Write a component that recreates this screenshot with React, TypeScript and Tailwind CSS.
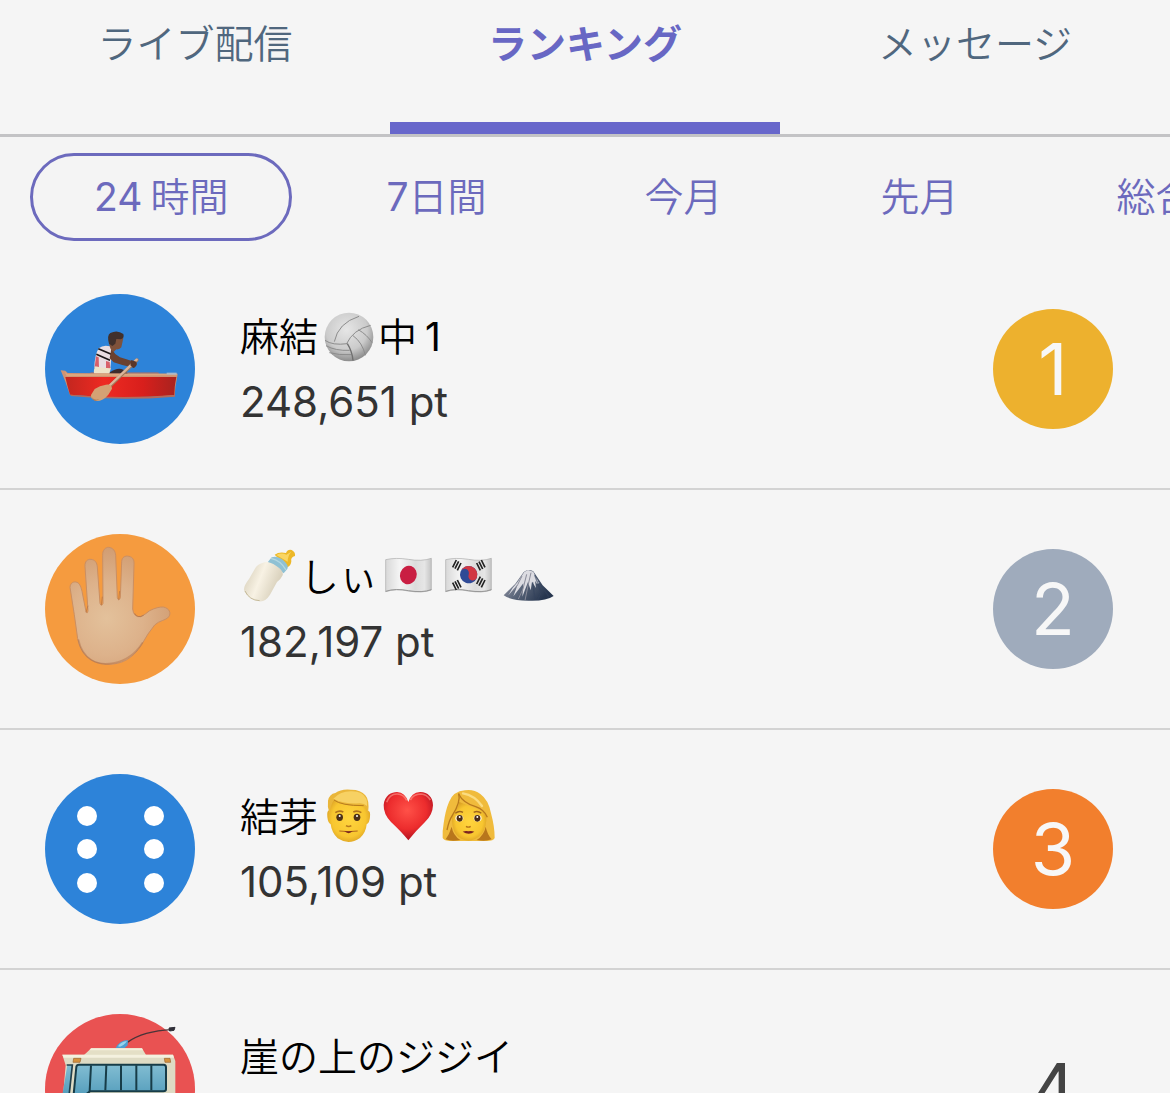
import { useState } from 'react';
import type { ReactNode } from 'react';
import clsx from 'clsx';

// ── Avatars ──

function RowboatAvatar() {
  return (
    <svg viewBox="15 27 450 450" className="h-full w-full overflow-visible" aria-hidden="true">
      <defs>
        <linearGradient id="hull" x1="0" x2="1" y1="0" y2="0">
          <stop offset="0" stopColor="#c2261f" />
          <stop offset=".35" stopColor="#ee2a22" />
          <stop offset=".7" stopColor="#d81f1c" />
          <stop offset="1" stopColor="#a8231f" />
        </linearGradient>
      </defs>
      <path d="M148 268 152 262H355L358 268Z" fill="#8d7480" />
      <path d="M210 262Q232 246 250 254L264 267H208Z" fill="#3d2b2c" />
      <path d="M176 190Q190 178 210 184L218 196Q213 222 211 252Q185 254 163 248Q164 210 176 190Z" fill="#e9dde2" />
      <path d="M168 214 176 217 177 250 164 247ZM198 228 209 231 211 252 198 252Z" fill="#d8606a" />
      <path d="M175 191 214 208M169 208 210 226" stroke="#1c1718" strokeWidth="5" />
      <path d="M166 244Q186 250 213 250L206 271 164 269Q158 260 166 244Z" fill="#ede3c8" />
      <path d="M214 191Q223 207 240 217L276 228Q291 230 290 240L282 248Q250 243 221 232L209 220Z" fill="#6a4130" />
      <path d="M212 192Q204 172 208 160Q216 145 236 148L250 158 248 169 244 187Q239 194 229 193L220 202Z" fill="#7f523b" />
      <path d="M207 176Q200 151 211 144Q232 133 250 147Q254 160 242 163L229 162 226 176 217 183Z" fill="#41302b" />
      <path d="M62 256 76 257 83 264 413 266 412 274Q405 302 404 334L90 330Q78 292 62 256Z" fill="#cf9373" />
      <path d="M76 276 409 276Q403 303 403 331Q250 344 90 329Q82 304 76 276Z" fill="url(#hull)" />
      <path d="M91 329Q240 343 404 330L405 335Q240 349 93 333Z" fill="#b36b5c" />
      <path d="M75 261 82 267 410 266V271L80 274Z" fill="#dca77e" />
      <path d="M380 263H410V269H380Z" fill="#a9b8cb" />
      <path d="M291 225 205 308" stroke="#a3795a" strokeWidth="10" strokeLinecap="round" />
      <path d="M290 224 204 306" stroke="#dbb49a" strokeWidth="7" strokeLinecap="round" />
      <path d="M198 299Q215 297 216 311L205 329Q188 349 169 348Q151 344 153 330L164 312Q179 301 198 299Z" fill="#d4a174" />
      <path d="M154 333Q160 348 178 343Q160 355 154 333Z" fill="#ad7650" />
      <path d="M274 225 289 230Q293 242 281 249L271 241Z" fill="#5a3629" />
    </svg>
  );
}

function HandAvatar() {
  return (
    <svg viewBox="15 27 450 450" className="h-full w-full" aria-hidden="true">
      <defs>
        <radialGradient id="skin" gradientUnits="userSpaceOnUse" cx="200" cy="280" r="220">
          <stop offset="0" stopColor="#e3c19b" />
          <stop offset=".5" stopColor="#ddb28b" />
          <stop offset="1" stopColor="#d09b70" />
        </radialGradient>
      </defs>
      <path
        d="M90 187C91 173 102 168 111 172C120 175 124 190 126 199L138 260Q142 269 144 257L135 125C134 108 143 102 153 103C165 104 171 113 172 126L180 235Q184 247 189 235L188 92C187 75 196 67 206 67C219 68 226 78 227 91L232 218Q236 231 241 218L245 109C246 97 255 91 267 94C279 97 283 105 282 119L278 252Q281 278 302 275Q315 269 329 257Q353 245 370 246C389 250 393 264 387 275C377 287 358 286 344 300Q323 325 305 359C278 402 244 419 200 418C150 416 121 385 113 341Q104 272 90 187Z"
        fill="url(#skin)"
        stroke="#cb8f62"
        strokeWidth="3"
      />
      <path d="M115 343C128 403 171 424 220 414C268 405 292 378 308 352" fill="none" stroke="#a8673f" strokeWidth="5" opacity=".4" />
      <path d="M138 262 144 242M184 240 187 215M236 224 239 198M284 265Q293 281 311 271" fill="none" stroke="#aa6d44" strokeWidth="3" opacity=".6" />
    </svg>
  );
}

function DiceAvatar() {
  return (
    <svg viewBox="0 0 150 150" className="h-full w-full" fill="#fff" aria-hidden="true">
      {[42, 75, 109].map((y) => (
        <g key={y}>
          <circle cx="42" cy={y} r="10" />
          <circle cx="109" cy={y} r="10" />
        </g>
      ))}
    </svg>
  );
}

function TrolleybusAvatar() {
  return (
    <svg viewBox="15 27 450 450" className="h-full w-full overflow-visible" aria-hidden="true">
      <defs>
        <linearGradient id="busGlass" x1="0" x2="0" y1="0" y2="1">
          <stop offset="0" stopColor="#82bdd2" />
          <stop offset="1" stopColor="#579fbd" />
        </linearGradient>
      </defs>
      <path d="M262 112Q310 78 395 74" fill="none" stroke="#4a3438" strokeWidth="4" />
      <path d="M387 69 405 67 402 76 389 78Z" fill="#302f38" stroke="#302f38" strokeWidth="3" />
      <path d="M227 129Q239 105 264 105L263 121 253 130Z" fill="#4d9ed1" />
      <path d="M234 124Q244 109 261 108Q253 121 240 125Z" fill="#97d3ed" />
      <path d="M132 150 154 130H306L318 150Z" fill="#e4dfc6" />
      <path d="M153 130H306L309 136H148Z" fill="#f4f0dc" />
      <path d="M67 149H399L406 168V390H58L70 262 77 181Z" fill="#dedbc4" />
      <path d="M67 149H399L402 158H71Z" fill="#f4f1df" />
      <path d="M82 180H98L89 264H68Z" fill="url(#busGlass)" />
      <path d="M80 180H97L88 264" fill="none" stroke="#233f4b" strokeWidth="5" />
      <path d="M117 179H371Q378 179 378 187V253Q378 259 370 259H150L138 268H101L109 186Q110 179 117 179Z" fill="url(#busGlass)" stroke="#173c48" strokeWidth="6" />
      <path d="M153 181 149 258M199 181 196 256M243 181V256M289 181V256M334 181V256" stroke="#173c48" strokeWidth="6" />
      <path d="M101 160H123L120 172H99ZM373 160H390L392 172H375Z" fill="#d5923d" stroke="#99642f" strokeWidth="2" />
      <path d="M62 306H406V390H58Z" fill="#3d93b5" />
      <circle cx="139" cy="390" r="27" fill="#333b42" />
      <circle cx="325" cy="390" r="27" fill="#333b42" />
    </svg>
  );
}

// ── Emoji used inside user names ──

function Emoji({ viewBox, label, children }: { viewBox: string; label: string; children: ReactNode }) {
  return (
    <svg viewBox={viewBox} className="size-[60px] shrink-0" role="img" aria-label={label}>
      {children}
    </svg>
  );
}

function Volleyball() {
  return (
    <Emoji viewBox="249 21 180 180" label="volleyball">
      <defs>
        <radialGradient id="ball" cx=".45" cy=".35" r=".65">
          <stop offset="0" stopColor="#e6e6e6" />
          <stop offset=".65" stopColor="#cbcbcb" />
          <stop offset="1" stopColor="#8c8c8c" />
        </radialGradient>
      </defs>
      <circle cx="342" cy="111" r="73" fill="url(#ball)" />
      <g fill="none" stroke="#8c8c8c" strokeWidth="3">
        <path d="M337 131Q292 137 270 121M298 125Q309 69 372 49M335 131Q354 89 407 76" />
        <path d="M273 137Q301 153 344 151M283 158Q312 166 349 164" />
        <path d="M354 107Q382 127 391 166M370 89Q397 105 411 128" />
        <path d="M337 131Q351 153 354 181" stroke="#6f6f6f" strokeWidth="4" />
      </g>
    </Emoji>
  );
}

function BabyBottle() {
  return (
    <Emoji viewBox="15 21 180 180" label="baby bottle">
      <defs>
        <linearGradient id="milk" x1="0" x2="1" y1=".3" y2=".7">
          <stop offset="0" stopColor="#d8d0bb" />
          <stop offset=".4" stopColor="#f8f2e4" />
          <stop offset="1" stopColor="#cfc6af" />
        </linearGradient>
      </defs>
      <path d="M119 44Q133 34 153 39Q158 27 170 30Q182 36 180 48Q166 52 169 64Q168 77 157 82Z" fill="#edb827" />
      <path d="M124 45Q139 37 154 44L169 35Q158 47 158 65Z" fill="#ffe17a" opacity=".7" />
      <path d="M110 52Q130 46 148 64Q162 77 157 87L146 100 98 67Z" fill="#8fc1d4" />
      <path d="M108 55Q137 61 153 90" fill="none" stroke="#b2d7e2" strokeWidth="4" />
      <path d="M84 68Q99 61 123 77Q147 92 143 106Q139 116 126 126L105 164Q91 186 73 184Q38 177 27 151Q25 139 42 117L61 84Q66 74 84 68Z" fill="url(#milk)" />
      <path d="M30 153Q43 181 74 182" fill="none" stroke="#c4b998" strokeWidth="3" />
    </Emoji>
  );
}

function FlagCloth({ id }: { id: string }) {
  return (
    <>
      <defs>
        <linearGradient id={id} x1="0" x2="1" y1="0" y2="0">
          <stop offset="0" stopColor="#d8d8d8" />
          <stop offset=".3" stopColor="#f4f4f4" />
          <stop offset=".65" stopColor="#dcdcdc" />
          <stop offset=".85" stopColor="#e6e6e6" />
          <stop offset="1" stopColor="#c4c4c4" />
        </linearGradient>
      </defs>
      <path
        d="M452 59Q482 52 520 58Q560 65 589 55V150Q562 160 520 153Q482 145 452 155Z"
        fill={`url(#${id})`}
        stroke="#aaaaaa"
        strokeWidth="2"
      />
      <path d="M452 154Q482 144 520 152Q562 159 589 149" fill="none" stroke="#989898" strokeWidth="3" />
    </>
  );
}

function JapanFlag() {
  return (
    <Emoji viewBox="429 21 180 180" label="flag of Japan">
      <FlagCloth id="clothJapan" />
      <ellipse cx="520" cy="105" rx="25" ry="28" fill="#c91e42" transform="rotate(18 520 105)" />
    </Emoji>
  );
}

function KoreaFlag() {
  return (
    <Emoji viewBox="429 21 180 180" label="flag of South Korea">
      <FlagCloth id="clothKorea" />
      <g transform="rotate(20 521 104)">
        <circle cx="521" cy="104" r="26" fill="#2f4a96" />
        <path d="M495 104A26 26 0 0 1 547 104A13 13 0 0 1 521 104A13 13 0 0 0 495 104Z" fill="#d13743" />
      </g>
      <g stroke="#222" strokeWidth="5">
        <path d="M473 82 484 60M480 86 491 64M487 91 498 69" />
        <path d="M545 69 556 91M552 65 563 87M559 60 570 82" />
        <path d="M473 128 484 150M480 124 491 146M487 120 498 142" />
        <path d="M545 132 556 110M552 137 563 115M559 142 570 120" />
      </g>
    </Emoji>
  );
}

function MountFuji() {
  return (
    <Emoji viewBox="789 21 180 180" label="mount fuji">
      <defs>
        <linearGradient id="fuji" x1="0" x2="1" y1="0" y2=".5">
          <stop offset="0" stopColor="#aaa9b5" />
          <stop offset=".5" stopColor="#5d687c" />
          <stop offset="1" stopColor="#27364f" />
        </linearGradient>
      </defs>
      <path d="M866 96Q880 85 895 94L923 136 956 168Q933 184 880 182Q829 182 806 166L841 131Z" fill="url(#fuji)" />
      <path d="M868 96 879 90 895 95 902 112 914 129 906 132 900 122 903 144 891 125 887 151 879 126 862 170 865 130 835 169 848 134 820 166Q830 144 848 126Z" fill="#dcdce2" />
      <path d="M861 108 848 134 835 151M875 103 864 147 850 177M888 98 879 137 870 181" fill="none" stroke="#898b99" strokeWidth="3" />
      <path d="M899 105 918 157 908 180M909 122 941 170M893 127 900 178" fill="none" stroke="#34435d" strokeWidth="4" opacity=".6" />
    </Emoji>
  );
}

function FaceGradient({ id }: { id: string }) {
  return (
    <defs>
      <radialGradient id={id} cx=".5" cy=".5" r=".6">
        <stop offset="0" stopColor="#ffd53e" />
        <stop offset=".65" stopColor="#f8c630" />
        <stop offset="1" stopColor="#d09320" />
      </radialGradient>
    </defs>
  );
}

function Man() {
  return (
    <Emoji viewBox="249 21 180 180" label="man">
      <FaceGradient id="faceMan" />
      <path d="M285 60Q340 30 396 60L398 92Q407 91 405 110Q404 128 395 133Q393 158 375 174Q341 197 308 175Q290 158 287 133Q279 129 277 111Q275 92 283 90Z" fill="url(#faceMan)" />
      <path d="M284 102Q276 82 279 62Q283 42 301 39Q318 26 348 29Q378 29 391 46Q405 61 399 101Q396 84 386 77Q350 81 319 71Q303 67 297 60Q286 76 284 102Z" fill="#eab63a" />
      <path d="M295 56Q318 32 352 34Q382 34 394 56Q398 65 396 78Q388 70 374 70Q323 72 295 56Z" fill="#f7d163" />
      <path d="M297 60Q318 77 386 77" fill="none" stroke="#b77b1c" strokeWidth="3" />
      <path d="M301 98Q313 90 325 96M355 96Q367 90 379 98" fill="none" stroke="#b0731c" strokeWidth="5" />
      <ellipse cx="314" cy="112" rx="10" ry="11" fill="#4d3018" />
      <ellipse cx="366" cy="112" rx="10" ry="11" fill="#4d3018" />
      <circle cx="314" cy="108" r="3" fill="#fff" />
      <circle cx="366" cy="108" r="3" fill="#fff" />
      <path d="M333 137Q341 142 349 137" fill="none" stroke="#b8791d" strokeWidth="5" />
      <path d="M313 153Q341 157 368 153" fill="none" stroke="#b0661c" strokeWidth="3" />
      <path d="M328 154Q341 165 353 154Z" fill="#7a2720" />
    </Emoji>
  );
}

function RedHeart() {
  return (
    <Emoji viewBox="429 21 180 180" label="red heart">
      <defs>
        <radialGradient id="heart" cx=".48" cy=".38" r=".65">
          <stop offset="0" stopColor="#ff5148" />
          <stop offset=".6" stopColor="#ec2c2d" />
          <stop offset="1" stopColor="#a90e20" />
        </radialGradient>
      </defs>
      <path d="M520 181Q501 157 468 126Q445 102 446 75C448 46 470 36 486 36Q511 38 520 66Q529 38 555 36C577 35 594 51 594 76Q593 105 570 126Q541 154 520 181Z" fill="url(#heart)" />
      <path d="M455 67Q464 41 487 42Q506 43 515 61M526 60Q535 43 557 42Q576 43 586 60" fill="none" stroke="#ff9a8e" strokeWidth="5" opacity=".6" />
    </Emoji>
  );
}

function Woman() {
  return (
    <Emoji viewBox="609 21 180 180" label="woman">
      <FaceGradient id="faceWoman" />
      <path d="M623 174Q622 152 626 130Q631 92 642 66Q654 34 690 31Q716 27 736 42Q761 60 768 100Q779 140 779 174Q776 183 755 183H648Q627 183 623 174Z" fill="#f0bb3c" />
      <path d="M650 140Q654 166 676 180Q648 185 632 178Q643 163 650 140ZM752 140Q747 166 725 180Q752 185 770 178Q757 163 752 140Z" fill="#b8761c" />
      <path d="M651 106Q668 88 673 66Q702 78 725 86Q744 94 754 108Q756 142 739 163Q721 182 700 182Q677 181 663 163Q649 143 651 106Z" fill="url(#faceWoman)" />
      <path d="M671 40Q678 66 652 106Q642 121 636 150" fill="none" stroke="#b8791d" strokeWidth="4" />
      <path d="M671 42Q684 69 722 80Q748 89 757 112" fill="none" stroke="#b8791d" strokeWidth="4" />
      <path d="M684 40Q719 46 741 78" fill="none" stroke="#fbdc80" strokeWidth="7" strokeLinecap="round" />
      <path d="M661 100Q672 91 684 97M716 97Q728 91 739 100" fill="none" stroke="#a0651c" strokeWidth="4" />
      <ellipse cx="673" cy="115" rx="12" ry="10" fill="#fff1cf" />
      <ellipse cx="728" cy="115" rx="12" ry="10" fill="#fff1cf" />
      <ellipse cx="674" cy="115" rx="9" ry="10" fill="#4b2d18" />
      <ellipse cx="727" cy="115" rx="9" ry="10" fill="#4b2d18" />
      <circle cx="674" cy="111" r="3" fill="#fff" />
      <circle cx="727" cy="111" r="3" fill="#fff" />
      <path d="M693 139Q700 144 707 139" fill="none" stroke="#b57117" strokeWidth="4" />
      <path d="M683 155Q693 151 700 154Q708 151 718 155Q702 167 683 155Z" fill="#7a2320" />
    </Emoji>
  );
}

// ── Data ──

const TABS = ['ライブ配信', 'ランキング', 'メッセージ'];

// count is set in Latin digits, unit in Japanese
const PERIODS = [
  { count: '24', unit: '時間', spaced: true },
  { count: '7', unit: '日間' },
  { unit: '今月' },
  { unit: '先月' },
  { unit: '総合' },
];

type RankingItem = {
  rank: number;
  name: ReactNode;
  points: string;
  avatar: React.ElementType;
  avatarColor: string;
  badge: string;
};

const RANKING: RankingItem[] = [
  {
    rank: 1,
    name: (
      <>
        麻結
        <Volleyball />
        中<span className="ml-2 font-normal">1</span>
      </>
    ),
    points: '248,651 pt',
    avatar: RowboatAvatar,
    avatarColor: 'bg-[#2d83d9]',
    badge: 'bg-[#edb12e] text-[#f7f7f7]',
  },
  {
    rank: 2,
    name: (
      <>
        <BabyBottle />
        しぃ
        <JapanFlag />
        <KoreaFlag />
        <MountFuji />
      </>
    ),
    points: '182,197 pt',
    avatar: HandAvatar,
    avatarColor: 'bg-[#f59b3f]',
    badge: 'bg-[#9fabbc] text-[#f7f7f7]',
  },
  {
    rank: 3,
    name: (
      <>
        結芽
        <Man />
        <RedHeart />
        <Woman />
      </>
    ),
    points: '105,109 pt',
    avatar: DiceAvatar,
    avatarColor: 'bg-[#2d83d9]',
    badge: 'bg-[#f27f2d] text-[#f7f7f7]',
  },
  {
    rank: 4,
    name: '崖の上のジジイ',
    points: '98,420 pt',
    avatar: TrolleybusAvatar,
    avatarColor: 'bg-[#e95252]',
    badge: 'text-[#444444]',
  },
];

function RankingRow({ item }: { item: RankingItem }) {
  return (
    <li className="flex h-60 items-center border-b-2 border-[#d3d3d3] pr-[57px] pl-[45px]">
      <div className={clsx('size-[150px] shrink-0 rounded-full', item.avatarColor)}>
        <item.avatar />
      </div>
      <div className="ml-[45px] min-w-0 flex-1 pt-0.5">
        <p className="flex h-16 items-center text-[39px] font-[350] whitespace-nowrap text-black">{item.name}</p>
        <p className="text-[42px] leading-[66px] text-[#333333]">{item.points}</p>
      </div>
      <div
        className={clsx(
          'flex size-[120px] shrink-0 items-center justify-center rounded-full text-[72px] leading-none',
          item.badge,
        )}
      >
        {item.rank}
      </div>
    </li>
  );
}

export default function App() {
  const [tab, setTab] = useState(1);
  const [period, setPeriod] = useState(0);

  return (
    <div className="flex h-screen flex-col overflow-hidden bg-[#f5f5f5] font-['Inter','Noto_Sans_CJK_JP',sans-serif]" lang="ja">
      <nav className="grid shrink-0 grid-cols-3 border-b-[3px] border-[#c3c3c5]">
        {TABS.map((label, i) => (
          <button
            key={label}
            type="button"
            onClick={() => setTab(i)}
            className={clsx(
              'border-b-[12px] pb-[34px] text-[39px] leading-[88px]',
              i === tab ? 'border-[#6867cb] font-bold text-[#6867c4]' : 'border-transparent font-[350] text-[#50677e]',
            )}
          >
            {label}
          </button>
        ))}
      </nav>

      <div className="flex shrink-0 gap-[30px] overflow-hidden bg-[#f4f4f4] px-[30px] pt-4 pb-[9px]">
        {PERIODS.map(({ count, unit, spaced }, i) => (
          <button
            key={unit}
            type="button"
            onClick={() => setPeriod(i)}
            className={clsx(
              'h-[88px] shrink-0 rounded-full border-[3px] px-[61px] text-[39px] whitespace-nowrap text-[#6c6abd]',
              i === period ? 'border-[#6c6abd]' : 'border-transparent',
            )}
          >
            {count}
            <span className={clsx('font-[350]', spaced && 'ml-2')}>{unit}</span>
          </button>
        ))}
      </div>

      <ul className="min-h-0 flex-1 overflow-y-auto [scrollbar-width:none]">
        {RANKING.map((item) => (
          <RankingRow key={item.rank} item={item} />
        ))}
      </ul>
    </div>
  );
}
